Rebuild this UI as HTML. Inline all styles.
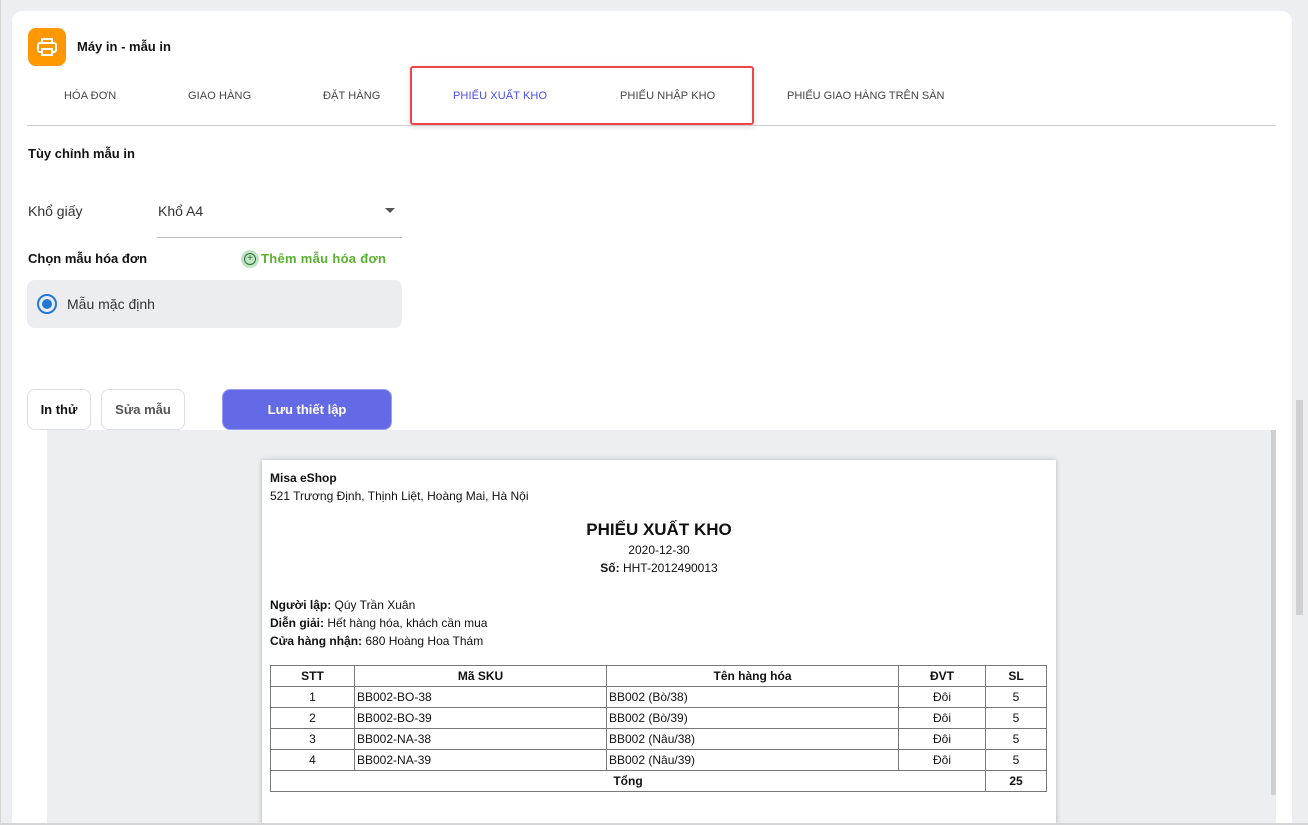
<!DOCTYPE html><html><head><meta charset="utf-8"><style>
*{box-sizing:border-box;margin:0;padding:0}
html{width:1308px;height:825px;overflow:hidden}
body{width:1308px;height:825px;background:#eceef2;font-family:"Liberation Sans",sans-serif;position:relative;overflow:hidden;color:#111}
.a{position:absolute}
.card{left:12px;top:11px;width:1280px;height:814px;background:#fff;border-radius:10px 10px 0 0}
.tab{top:90px;font-size:11px;color:#444;letter-spacing:.1px}
.btn{border:1px solid #dcdde2;border-radius:8px;background:#fff;font-size:13px;font-weight:bold;display:flex;align-items:center;justify-content:center}
table{border-collapse:collapse;font-size:12px}
td,th{border:1px solid #777;height:21px;padding:0 2px}
th{font-weight:bold}
.c{text-align:center}
</style></head><body>
<div class="a card"></div>
<div class="a" style="left:1292px;top:0;width:16px;height:825px;background:#eceef2"></div>
<div class="a" style="left:1296px;top:400px;width:7px;height:215px;background:#d0d0d2"></div>
<div class="a" style="left:28px;top:28px;width:38px;height:38px;background:#ff9800;border-radius:8px"></div>
<svg class="a" style="left:35px;top:35px" width="24" height="24" viewBox="0 0 24 24" fill="none" stroke="#fff" stroke-width="2"><path d="M7 8V4h10v4"/><rect x="3" y="8" width="18" height="9" rx="2"/><path d="M7 14h10v6H7z" fill="#ff9800"/></svg>
<div class="a" style="left:77px;top:39px;font-size:13px;font-weight:bold">Máy in - mẫu in</div>
<div class="a tab" style="left:64px">HÓA ĐƠN</div>
<div class="a tab" style="left:188px">GIAO HÀNG</div>
<div class="a tab" style="left:323px">ĐẶT HÀNG</div>
<div class="a tab" style="left:453px;color:#4a4cf0">PHIẾU XUẤT KHO</div>
<div class="a tab" style="left:620px">PHIẾU NHẬP KHO</div>
<div class="a tab" style="left:787px;letter-spacing:0">PHIẾU GIAO HÀNG TRÊN SÀN</div>
<div class="a" style="left:410px;top:66px;width:344px;height:59px;border:2px solid #f04448;border-radius:3px;box-shadow:0 2px 6px rgba(0,0,0,.15)"></div>
<div class="a" style="left:27px;top:125px;width:1249px;height:1px;background:#ccc"></div>
<div class="a" style="left:28px;top:146px;font-size:13px;font-weight:bold">Tùy chỉnh mẫu in</div>
<div class="a" style="left:28px;top:203px;font-size:14px;color:#333">Khổ giấy</div>
<div class="a" style="left:158px;top:203px;font-size:14px;color:#333">Khổ A4</div>
<div class="a" style="left:385px;top:208px;border-left:5px solid transparent;border-right:5px solid transparent;border-top:5px solid #555"></div>
<div class="a" style="left:157px;top:237px;width:245px;height:1px;background:#bbb"></div>
<div class="a" style="left:28px;top:251px;font-size:13px;font-weight:bold">Chọn mẫu hóa đơn</div>
<div class="a" style="left:241px;top:250px;width:18px;height:18px;border-radius:50%;background:#bfe4c2"></div>
<div class="a" style="left:244px;top:253px;width:12px;height:12px;border-radius:50%;border:1.5px solid #2e6b3a;font-size:10px;line-height:9px;text-align:center;color:#2e6b3a">+</div>
<div class="a" style="left:261px;top:251px;font-size:13px;font-weight:bold;color:#5ab030;letter-spacing:.3px">Thêm mẫu hóa đơn</div>
<div class="a" style="left:27px;top:280px;width:375px;height:48px;background:#ecedf1;border-radius:8px"></div>
<div class="a" style="left:37px;top:294px;width:20px;height:20px;border-radius:50%;border:2px solid #2479d8"></div>
<div class="a" style="left:42px;top:299px;width:10px;height:10px;border-radius:50%;background:#2479d8"></div>
<div class="a" style="left:67px;top:296px;font-size:14px;color:#333">Mẫu mặc định</div>
<div class="a btn" style="left:27px;top:389px;width:64px;height:41px">In thử</div>
<div class="a btn" style="left:101px;top:389px;width:84px;height:41px;color:#555">Sửa mẫu</div>
<div class="a btn" style="left:222px;top:389px;width:170px;height:41px;background:#646ae6;border-color:#9a9ef0;color:#fff">Lưu thiết lập</div>
<div class="a" style="left:47px;top:430px;width:1229px;height:395px;background:#eceef2"></div>
<div class="a" style="left:1271px;top:430px;width:5px;height:365px;background:#d0d0d2"></div>
<div class="a" style="left:262px;top:460px;width:794px;height:365px;background:#fff;box-shadow:0 0 5px rgba(0,0,0,.25)"></div>
<div class="a" style="left:270px;top:469px;font-size:12px;line-height:18px"><b>Misa eShop</b><br>521 Trương Định, Thịnh Liệt, Hoàng Mai, Hà Nội</div>
<div class="a" style="left:262px;top:519px;width:794px;text-align:center;font-size:12px;line-height:18px"><div style="font-size:17px;font-weight:bold;line-height:22px">PHIẾU XUẤT KHO</div>2020-12-30<br><b>Số:</b> HHT-2012490013</div>
<div class="a" style="left:270px;top:596px;font-size:12px;line-height:18px"><b>Người lập:</b> Qúy Trần Xuân<br><b>Diễn giải:</b> Hết hàng hóa, khách cần mua<br><b>Cửa hàng nhận:</b> 680 Hoàng Hoa Thám</div>
<table class="a" style="left:270px;top:665px;width:777px;border:1.5px solid #333">
<tr><th style="width:84px">STT</th><th style="width:252px">Mã SKU</th><th style="width:292px">Tên hàng hóa</th><th style="width:87px">ĐVT</th><th>SL</th></tr>
<tr><td class="c">1</td><td>BB002-BO-38</td><td>BB002 (Bò/38)</td><td class="c">Đôi</td><td class="c">5</td></tr>
<tr><td class="c">2</td><td>BB002-BO-39</td><td>BB002 (Bò/39)</td><td class="c">Đôi</td><td class="c">5</td></tr>
<tr><td class="c">3</td><td>BB002-NA-38</td><td>BB002 (Nâu/38)</td><td class="c">Đôi</td><td class="c">5</td></tr>
<tr><td class="c">4</td><td>BB002-NA-39</td><td>BB002 (Nâu/39)</td><td class="c">Đôi</td><td class="c">5</td></tr>
<tr><th colspan="4">Tổng</th><th>25</th></tr>
</table>
<div class="a" style="left:0;top:823px;width:1308px;height:2px;background:#d5d5d8"></div>
<div class="a" style="left:0;top:0;width:1px;height:825px;background:#d5d5d8"></div>
</body></html>
